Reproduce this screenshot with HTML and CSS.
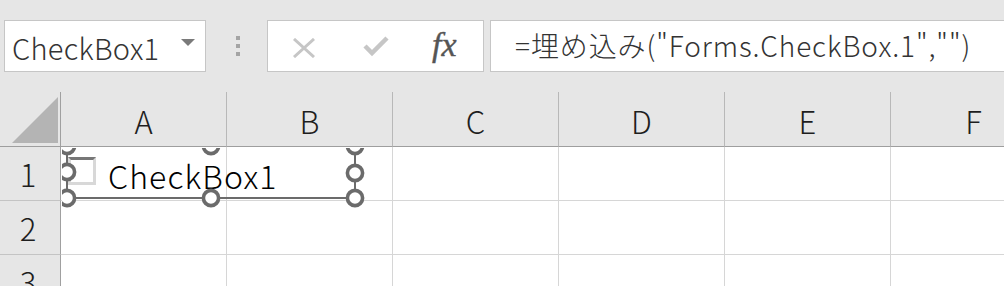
FILE: index.html
```html
<!DOCTYPE html>
<html lang="ja">
<head>
<meta charset="utf-8">
<link rel="stylesheet" href="styles.css">
</head>
<body>
<div class="toolbar">
  <div class="namebox">
    <span class="name">CheckBox1</span>
    <span class="caret"></span>
  </div>
  <div class="grip"><i></i><i></i><i></i></div>
  <div class="fxbox">
    <svg class="ico-x" width="24" height="20" viewBox="0 0 24 20"><path d="M2 1 L22 19 M22 1 L2 19" stroke="#c6c6c6" stroke-width="3" fill="none"/></svg>
    <svg class="ico-check" width="26" height="22" viewBox="0 0 26 22"><path d="M2 11 L9 18 L24 3" stroke="#c6c6c6" stroke-width="4.5" fill="none"/></svg>
    <span class="fx">fx</span>
  </div>
  <div class="formula">=埋め込み("Forms.CheckBox.1","")</div>
</div>
<div class="sheet">
  <div class="grid">
    <div class="corner"><span class="tri"></span></div>
    <div class="colh">A</div>
    <div class="colh">B</div>
    <div class="colh">C</div>
    <div class="colh">D</div>
    <div class="colh">E</div>
    <div class="colh">F</div>

    <div class="rowh">1</div>
    <div class="cell"></div><div class="cell"></div><div class="cell"></div><div class="cell"></div><div class="cell"></div><div class="cell"></div>
    <div class="rowh">2</div>
    <div class="cell"></div><div class="cell"></div><div class="cell"></div><div class="cell"></div><div class="cell"></div><div class="cell"></div>
    <div class="rowh">3</div>
    <div class="cell"></div><div class="cell"></div><div class="cell"></div><div class="cell"></div><div class="cell"></div><div class="cell"></div>
  </div>
  <div class="overlay">
    <span class="cbox"></span>
    <span class="cblabel">CheckBox1</span>
    <svg class="frame" width="320" height="70" viewBox="0 0 320 70">
      <rect x="5" y="-2" width="288" height="52" fill="none" stroke="#6b6b6b" stroke-width="2"/>
      <g fill="#fff" stroke="#6b6b6b" stroke-width="3.6">
        <circle cx="5" cy="-2" r="7.6"/>
        <circle cx="149" cy="-2" r="7.6"/>
        <circle cx="293" cy="-2" r="7.6"/>
        <circle cx="5" cy="24" r="7.6"/>
        <circle cx="293" cy="25" r="7.6"/>
        <circle cx="5" cy="50" r="7.6"/>
        <circle cx="149" cy="50" r="7.6"/>
        <circle cx="293" cy="50" r="7.6"/>
      </g>
    </svg>
  </div>
</div>
</body>
</html>
```

FILE: styles.css
```css
* { box-sizing: border-box; }
html, body { margin: 0; padding: 0; }
body {
  width: 1004px;
  height: 286px;
  overflow: hidden;
  background: #e6e6e6;
  font-family: "Noto Sans CJK JP", "Noto Sans", sans-serif;
  font-weight: 300;
}
.toolbar {
  height: 92px;
  display: flex;
  align-items: flex-start;
  padding-top: 20px;
  padding-left: 4px;
}
.namebox {
  width: 202px;
  height: 52px;
  background: #fff;
  border: 1px solid #c6c6c6;
  display: flex;
  align-items: center;
  justify-content: space-between;
  padding: 0 10px 0 7px;
}
.name {
  font-size: 29px;
  color: #333;
  line-height: 1;
  padding-top: 2px;
  letter-spacing: 0.3px;
}
.caret {
  width: 0;
  height: 0;
  border-left: 7px solid transparent;
  border-right: 7px solid transparent;
  border-top: 7px solid #7a7a7a;
  margin-top: -8px;
}
.grip {
  width: 61px;
  height: 52px;
  display: flex;
  flex-direction: column;
  align-items: center;
  justify-content: center;
  gap: 4px;
  padding-left: 2px;
}
.grip i {
  display: block;
  width: 4px;
  height: 4px;
  background: #a4a4a4;
}
.fxbox {
  width: 217px;
  height: 52px;
  background: #fff;
  border: 1px solid #c6c6c6;
  display: flex;
  align-items: center;
  padding-left: 24px;
}
.ico-x { margin-top: 4px; }
.ico-check { margin-left: 47px; margin-top: 0; }
.fx {
  margin-left: 43px;
  font-family: "Liberation Serif", "DejaVu Serif", serif;
  font-style: italic;
  font-weight: 400;
  font-size: 34px;
  color: #555;
  line-height: 1;
  margin-top: -2px;
  -webkit-text-stroke: 0.4px #555;
}
.formula {
  margin-left: 6px;
  flex: 1;
  height: 52px;
  background: #fff;
  border: 1px solid #c6c6c6;
  border-right: none;
  font-size: 28px;
  color: #333;
  line-height: 48px;
  padding-left: 24px;
  white-space: nowrap;
  letter-spacing: 0.9px;
}
.sheet {
  position: relative;
  height: 194px;
  overflow: hidden;
}
.grid {
  display: grid;
  grid-template-columns: 61px repeat(6, 166px);
  grid-template-rows: 55px 54px 54px 54px;
}
.corner {
  position: relative;
  border-right: 1px solid #a0a0a0;
  border-bottom: 1px solid #9e9e9e;
}
.tri {
  position: absolute;
  left: 12px;
  top: 5px;
  width: 46px;
  height: 46px;
  background: #b4b4b4;
  clip-path: polygon(100% 0, 100% 100%, 0 100%);
}
.colh {
  border-bottom: 1px solid #9e9e9e;
  border-right: 1px solid #b8b8b8;
  display: flex;
  align-items: center;
  justify-content: center;
  font-size: 31px;
  color: #1e1e1e;
  padding-top: 2px;
  background: linear-gradient(#e6e6e6 0 3px, transparent 3px);
}
.rowh {
  border-right: 1px solid #a0a0a0;
  border-bottom: 1px solid #c4c4c4;
  display: flex;
  align-items: center;
  justify-content: center;
  font-size: 31px;
  color: #1e1e1e;
  padding-right: 4px;
}
.cell {
  background: #fff;
  border-right: 1px solid #d6d6d6;
  border-bottom: 1px solid #d6d6d6;
}
.overlay {
  position: absolute;
  left: 62px;
  top: 56px;
  right: 0;
  bottom: 0;
  overflow: hidden;
}
.frame {
  position: absolute;
  left: 0;
  top: 0;
}
.cbox {
  position: absolute;
  left: 6px;
  top: 9px;
  width: 28px;
  height: 28px;
  border: 3px solid #d8d8d8;
  border-top: 3px solid #777;
}
.cblabel {
  position: absolute;
  left: 46px;
  top: 7px;
  font-size: 32px;
  line-height: 40px;
  color: #000;
  white-space: nowrap;
  letter-spacing: 1.1px;
}
```
